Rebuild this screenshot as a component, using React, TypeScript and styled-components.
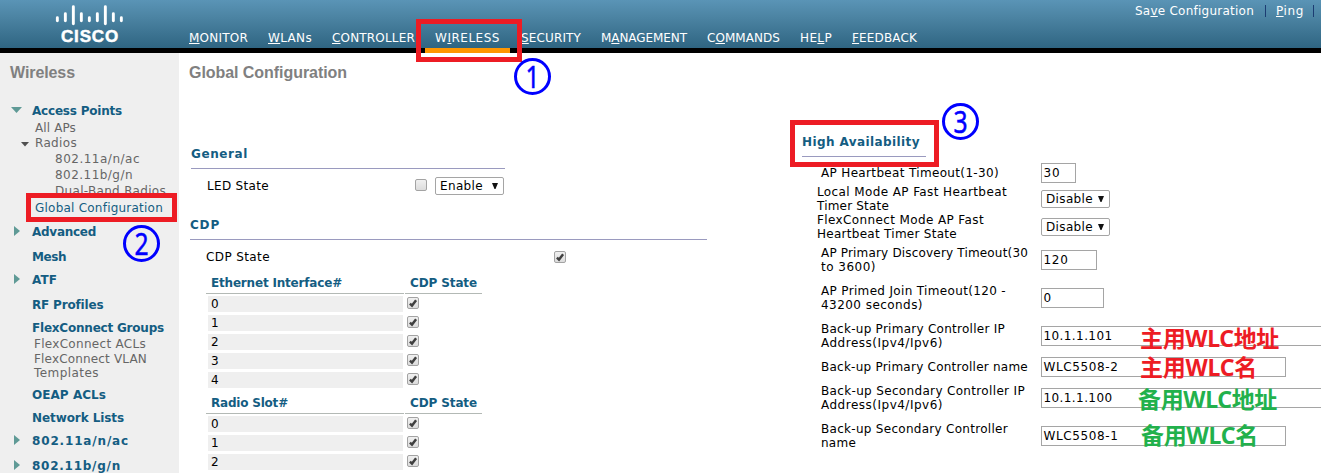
import React, { useLayoutEffect, useRef, useState } from 'react';
import styled, { createGlobalStyle, css } from 'styled-components';

const GlobalStyle = createGlobalStyle`
  * { box-sizing: border-box; }
  html, body { margin: 0; padding: 0; overflow: hidden; background: #fff; }
  body { font: 12px "DejaVu Sans", sans-serif; color: #000; }
`;

const RED = '#ed1c24';
const GREEN = '#22b14c';
const NAVY = '#145d82';

const Tracked = styled.span`
  display: inline-block;
  white-space: pre;
`;

/* Tracks a caption out (or in) so that it spans the given number of pixels. */
function Caption({ w, children }: { w: number; children: React.ReactNode }) {
  const ref = useRef<HTMLSpanElement>(null);
  const [spacing, setSpacing] = useState(0);
  useLayoutEffect(() => {
    const el = ref.current;
    if (!el || !el.textContent) return;
    setSpacing((w - el.getBoundingClientRect().width) / el.textContent.length);
  }, [w]);
  return <Tracked ref={ref} style={{ letterSpacing: spacing }}>{children}</Tracked>;
}

const Page = styled.div`
  position: relative;
  width: 1321px;
  height: 473px;
  overflow: hidden;
  display: flex;
  flex-direction: column;
`;

const Header = styled.header`
  height: 53px;
  flex: none;
  display: flex;
  border-bottom: 5px solid #000;
  background: linear-gradient(#5a94b6, #4c84a3 35%, #2f6582);
  color: #fff;
`;

const Brand = styled.div`
  width: 179px;
  padding: 5px 0 0 55px;
  display: flex;
  flex-direction: column;
  align-items: flex-start;
`;

const BrandName = styled.div`
  margin: 2px 0 0 6px;
  font: bold 17px/18px "Liberation Sans", sans-serif;
  -webkit-text-stroke: 0.5px #fff;
`;

const Nav = styled.nav`
  display: flex;
  align-items: flex-end;
`;

const NavItem = styled.a<{ $active?: boolean }>`
  height: 28px;
  padding: 10px 10px 0 10px;
  line-height: 17px;
  white-space: nowrap;
  ${p => p.$active && css`height: 33px; margin: 0 1px -5px 0; border-bottom: 5px solid #ff9600;`}
`;

const Tools = styled.div`
  margin-left: auto;
  padding-right: 7px;
  height: 22px;
  display: flex;
  align-items: center;
`;

const Divider = styled.i`
  width: 1px;
  height: 12px;
  margin: 0 10px 0 11px;
  background: #1c3c72;
  &:last-child { margin: 0 0 0 9px; }
`;

const Body = styled.div`
  flex: 1;
  display: flex;
  min-height: 0;
`;

const Sidebar = styled.aside`
  width: 179px;
  flex: none;
  background: #efefef;
`;

const Title = styled.h1`
  margin: 0;
  padding: 11px 0 0 10px;
  height: 50px;
  font: bold 16px/18px "Liberation Sans", sans-serif;
  color: #808080;
`;

const MenuRow = styled.div<{ $gap: number; $indent: number; $tone: 'group' | 'link' | 'current' }>`
  display: flex;
  height: 14px;
  line-height: 14px;
  margin-top: ${p => p.$gap}px;
  padding-left: ${p => p.$indent - 1}px;
  color: ${p => (p.$tone === 'link' ? '#666' : NAVY)};
  font-weight: ${p => (p.$tone === 'group' ? 'bold' : 'normal')};
`;

const Arrow = styled.svg<{ $w: number; $right: number }>`
  flex: none;
  width: ${p => p.$w}px;
  height: 12px;
  margin-left: -${p => p.$w + p.$right}px;
  margin-right: ${p => p.$right}px;
`;

const Main = styled.main`
  width: 611px;
  flex: none;
`;

const Section = styled.section<{ $w: number; $left?: number; $top?: number }>`
  margin: ${p => p.$top ?? 0}px 0 0 ${p => p.$left ?? 0}px;
  width: ${p => p.$w}px;
`;

const Heading = styled.h2`
  margin: 0;
  height: 22px;
  line-height: 14px;
  font-size: 12px;
  color: ${NAVY};
  border-bottom: 1px solid #9a9abf;
`;

const Setting = styled.div<{ $h: number; $w: number }>`
  display: flex;
  align-items: center;
  height: ${p => p.$h}px;
  width: ${p => p.$w}px;
  padding-left: 16px;
`;

const Push = styled.span`
  margin-left: auto;
  display: flex;
  align-items: center;
  gap: 8px;
`;

const Check = styled.span<{ $lift?: boolean }>`
  display: block;
  flex: none;
  width: 12px;
  height: 12px;
  margin-bottom: ${p => (p.$lift ? 3 : 0)}px;
  border: 1px solid #a3a3a3;
  border-radius: 2px;
  background: linear-gradient(#f0f0f0, #dcdcdc);
  svg { display: block; width: 10px; height: 10px; }
`;

const Select = styled.div`
  width: 69px;
  height: 18px;
  flex: none;
  display: flex;
  align-items: center;
  justify-content: space-between;
  padding: 0 5px 0 4px;
  border: 1px solid #a5a5a5;
  border-radius: 2px;
  background: #fff;
  svg { width: 6px; height: 6px; }
`;

const Grid = styled.div`
  margin: 0 0 0 16px;
  padding-bottom: 2px;
  width: 276px;
`;

const GridHead = styled.div`
  display: grid;
  grid-template-columns: 198px 77px;
  column-gap: 1px;
  height: 21px;
  margin-bottom: 2px;
  font-weight: bold;
  line-height: 14px;
  color: ${NAVY};
  div { padding: 3px 0 0 5px; border-bottom: 1px solid #b3b9b5; }
`;

const GridRow = styled.div`
  display: flex;
  height: 16px;
  margin-bottom: 3px;
`;

const Index = styled.div`
  width: 195px;
  margin: 0 4px 0 2px;
  padding-left: 3px;
  line-height: 17px;
  background: #efefef;
`;

const GridCheck = styled.div`
  padding-top: 1px;
`;

const Availability = styled.section`
  flex: 1;
  min-width: 0;
  padding: 82px 0 0 12px;
`;

const Fields = styled.div`
  padding-top: 3px;
`;

const Field = styled.div<{ $h: number; $indent: number }>`
  display: flex;
  align-items: center;
  height: ${p => p.$h}px;
  padding-left: ${p => p.$indent}px;
`;

const FieldLabel = styled.div<{ $w: number }>`
  width: ${p => p.$w}px;
  flex: none;
  display: flex;
  flex-direction: column;
  align-items: flex-start;
  line-height: 14px;
`;

const Input = styled.div<{ $w: number }>`
  width: ${p => p.$w}px;
  height: 20px;
  flex: none;
  padding: 0 0 0 1.5px;
  line-height: 19px;
  border: 1px solid #a5a5a5;
  background: #fff;
`;

const Frame = styled.div<{ $x: number; $y: number; $w: number; $h: number }>`
  position: absolute;
  left: ${p => p.$x}px;
  top: ${p => p.$y}px;
  width: ${p => p.$w}px;
  height: ${p => p.$h}px;
  border: 5px solid ${RED};
`;

const Step = styled.div<{ $x: number; $y: number }>`
  position: absolute;
  left: ${p => p.$x}px;
  top: ${p => p.$y}px;
  width: 37px;
  height: 37px;
  border: 3px solid #0000ff;
  border-radius: 50%;
  color: #0000ff;
  font: 30px/31px "Noto Sans", sans-serif;
  text-align: center;
  span { display: block; transform: scaleX(0.82); -webkit-text-stroke: 0.5px #0000ff; }
`;

const Note = styled.div<{ $x: number; $y: number; $c: string }>`
  position: absolute;
  left: ${p => p.$x}px;
  top: ${p => p.$y}px;
  color: ${p => p.$c};
  font: bold 23px/24px "Noto Sans", "Noto Sans CJK SC", sans-serif;
`;

const Tick = () => (
  <Check>
    <svg viewBox="0 0 10 10"><path d="M1.9 5.6 L4 7.6 L8.1 2.2" fill="none" stroke="#404040" strokeWidth="2.4" /></svg>
  </Check>
);

const Dropdown = ({ w, text }: { w: number; text: string }) => (
  <Select>
    <Caption w={w}>{text}</Caption>
    <svg viewBox="0 0 6 6"><path d="M0 0H6L3.5 6H2.5Z" fill="#111" /></svg>
  </Select>
);

const nav: [string, string, string, number][] = [
  ['', 'M', 'ONITOR', 59], ['', 'W', 'LANs', 44], ['', 'C', 'ONTROLLER', 83], ['W', 'I', 'RELESS', 65],
  ['', 'S', 'ECURITY', 60], ['M', 'A', 'NAGEMENT', 86], ['C', 'O', 'MMANDS', 73], ['HE', 'L', 'P', 32], ['', 'F', 'EEDBACK', 65],
];

type Item = [string, number, number, number, 'group' | 'link' | 'current', ('down' | 'right' | 'small')?];
const menu: Item[] = [
  ['Access Points', 33, 90, 1, 'group', 'down'],
  ['All APs', 36, 41, 3, 'link'],
  ['Radios', 36, 42, 1, 'link', 'small'],
  ['802.11a/n/ac', 56, 85, 2, 'link'],
  ['802.11b/g/n', 56, 78, 2, 'link'],
  ['Dual-Band Radios', 56, 111, 2, 'link'],
  ['Global Configuration', 36, 128, 3, 'current'],
  ['Advanced', 33, 64, 10, 'group', 'right'],
  ['Mesh', 33, 34, 11, 'group'],
  ['ATF', 33, 25, 9, 'group', 'right'],
  ['RF Profiles', 33, 71, 11, 'group'],
  ['FlexConnect Groups', 33, 132, 9, 'group'],
  ['FlexConnect ACLs', 35, 112, 2, 'link'],
  ['FlexConnect VLAN', 35, 113, 1, 'link'],
  ['Templates', 35, 65, 0, 'link'],
  ['OEAP ACLs', 33, 74, 8, 'group'],
  ['Network Lists', 33, 92, 9, 'group'],
  ['802.11a/n/ac', 33, 97, 9, 'group', 'right'],
  ['802.11b/g/n', 33, 89, 11, 'group', 'right'],
];

const MenuArrow = ({ kind }: { kind: 'down' | 'right' | 'small' }) => {
  if (kind === 'down') return <Arrow $w={11} $right={10} viewBox="0 0 11 12"><path d="M0 3H11L5.5 9Z" fill="#5f9a96" /></Arrow>;
  if (kind === 'small') return <Arrow $w={8} $right={6} viewBox="0 0 8 12"><path d="M0 6H8L4 10.5Z" fill="#505050" /></Arrow>;
  return <Arrow $w={6} $right={12} viewBox="0 0 6 12"><path d="M0 1L6 6L0 11Z" fill="#5f9a96" /></Arrow>;
};

type FieldSpec = { h: number; indent?: number; lines: [string, number][]; select?: boolean; value: string; tw: number; w?: number };
const fields: FieldSpec[] = [
  { h: 26, lines: [['AP Heartbeat Timeout(1-30)', 178]], value: '30', tw: 17, w: 35 },
  { h: 26, indent: 15, lines: [['Local Mode AP Fast Heartbeat', 190], ['Timer State', 72]], select: true, value: 'Disable', tw: 47 },
  { h: 30, indent: 15, lines: [['FlexConnect Mode AP Fast', 167], ['Heartbeat Timer State', 140]], select: true, value: 'Disable', tw: 47 },
  { h: 36, lines: [['AP Primary Discovery Timeout(30', 207], ['to 3600)', 55]], value: '120', tw: 25, w: 56 },
  { h: 40, lines: [['AP Primed Join Timeout(120 -', 185], ['43200 seconds)', 102]], value: '0', tw: 8, w: 63 },
  { h: 36, lines: [['Back-up Primary Controller IP', 184], ['Address(Ipv4/Ipv6)', 122]], value: '10.1.1.101', tw: 69, w: 290 },
  { h: 26, lines: [['Back-up Primary Controller name', 207]], value: 'WLC5508-2', tw: 75, w: 245 },
  { h: 36, lines: [['Back-up Secondary Controller IP', 204], ['Address(Ipv4/Ipv6)', 122]], value: '10.1.1.100', tw: 69, w: 290 },
  { h: 40, lines: [['Back-up Secondary Controller', 187], ['name', 35]], value: 'WLC5508-1', tw: 75, w: 245 },
];

const StateTable = ({ title, w, rows }: { title: string; w: number; rows: number }) => (
  <Grid>
    <GridHead>
      <div><Caption w={w}>{title}</Caption></div>
      <div><Caption w={67}>CDP State</Caption></div>
    </GridHead>
    {Array.from({ length: rows }, (_, i) => (
      <GridRow key={i}><Index>{i}</Index><GridCheck><Tick /></GridCheck></GridRow>
    ))}
  </Grid>
);

const bars = [[11, 6], [7, 10], [0, 20], [7, 10], [11, 6], [7, 10], [0, 20], [7, 10], [11, 6]];

export default function App() {
  return (
    <Page>
      <GlobalStyle />
      <Header>
        <Brand>
          <svg width="70" height="21" viewBox="0 0 70 21">
            {bars.map(([y, h], i) => <rect key={i} x={0.9 + i * 8} y={y + 0.2} width="2.9" height={h} rx="1.45" fill="#fff" />)}
          </svg>
          <BrandName><Caption w={58}>CISCO</Caption></BrandName>
        </Brand>
        <Nav>
          {nav.map(([a, b, c, w]) => (
            <NavItem key={b + c} $active={c === 'RELESS'}><Caption w={w}>{a}<u>{b}</u>{c}</Caption></NavItem>
          ))}
        </Nav>
        <Tools>
          <Caption w={119}>Sa<u>v</u>e Configuration</Caption><Divider />
          <Caption w={28}><u>P</u>ing</Caption><Divider />
        </Tools>
      </Header>
      <Body>
        <Sidebar>
          <Title><Caption w={65}>Wireless</Caption></Title>
          {menu.map(([text, x, w, gap, tone, arrow], i) => (
            <MenuRow key={i} $gap={gap} $indent={x} $tone={tone}>
              {arrow && <MenuArrow kind={arrow} />}
              <Caption w={w}>{text}</Caption>
            </MenuRow>
          ))}
        </Sidebar>
        <Main>
          <Title><Caption w={158}>Global Configuration</Caption></Title>
          <Section $left={12} $top={44} $w={314}>
            <Heading><Caption w={57}>General</Caption></Heading>
            <Setting $h={34} $w={313}>
              <Caption w={62}>LED State</Caption>
              <Push><Check $lift /><Dropdown w={43} text="Enable" /></Push>
            </Setting>
          </Section>
          <Section $left={11} $top={15} $w={517}>
            <Heading><Caption w={30}>CDP</Caption></Heading>
            <Setting $h={33} $w={376}>
              <Caption w={64}>CDP State</Caption>
              <Push><Tick /></Push>
            </Setting>
            <StateTable title="Ethernet Interface#" w={131} rows={5} />
            <StateTable title="Radio Slot#" w={77} rows={3} />
          </Section>
        </Main>
        <Availability>
          <Section $w={124}>
            <Heading><Caption w={118}>High Availability</Caption></Heading>
          </Section>
          <Fields>
            {fields.map((f, i) => (
              <Field key={i} $h={f.h} $indent={f.indent ?? 19}>
                <FieldLabel $w={239 - (f.indent ?? 19)}>
                  {f.lines.map(([t, w]) => <Caption key={t} w={w}>{t}</Caption>)}
                </FieldLabel>
                {f.select ? <Dropdown w={f.tw} text={f.value} /> : <Input $w={f.w ?? 60}><Caption w={f.tw}>{f.value}</Caption></Input>}
              </Field>
            ))}
          </Fields>
        </Availability>
      </Body>
      <Frame $x={416} $y={19} $w={106} $h={43} />
      <Frame $x={26} $y={193} $w={151} $h={29} />
      <Frame $x={790} $y={120} $w={149} $h={47} />
      <Step $x={514} $y={58}><span>1</span></Step>
      <Step $x={123} $y={225}><span>2</span></Step>
      <Step $x={942} $y={103}><span>3</span></Step>
      <Note $x={1140} $y={326} $c={RED}><Caption w={139}>主用WLC地址</Caption></Note>
      <Note $x={1140} $y={355} $c={RED}><Caption w={117}>主用WLC名</Caption></Note>
      <Note $x={1138} $y={387} $c={GREEN}><Caption w={139}>备用WLC地址</Caption></Note>
      <Note $x={1141} $y={423} $c={GREEN}><Caption w={117}>备用WLC名</Caption></Note>
    </Page>
  );
}
